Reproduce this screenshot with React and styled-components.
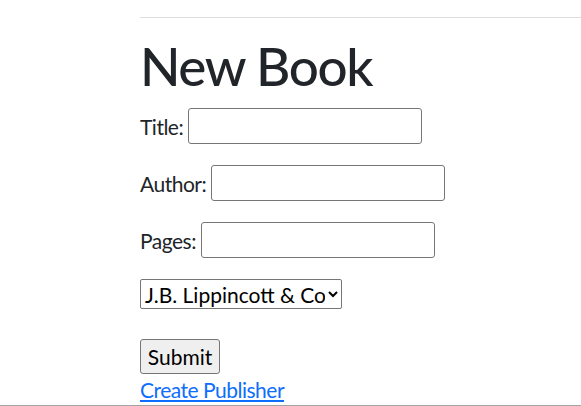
import styled, { createGlobalStyle } from "styled-components";

const GlobalStyle = createGlobalStyle`
  body {
    margin: 0;
    background: #fff;
    color: #212529;
    font-family: Lato, "Noto Sans", sans-serif;
  }
`;

const Page = styled.div`
  height: 406px;
  box-sizing: border-box;
  border-bottom: 1px solid #a3a3a3;
  overflow: hidden;
`;

const Container = styled.main`
  padding: 17px 0 0 140px;
`;

const Rule = styled.hr`
  margin: 0;
  height: 0;
  border: 0;
  border-top: 1px solid #dedede;
`;

const Heading = styled.h1`
  margin: 16px 0 10px;
  font-size: 53px;
  line-height: 64px;
  font-weight: 500;
  letter-spacing: -1.4px;
`;

const Form = styled.form`
  display: flex;
  flex-direction: column;
  align-items: flex-start;
  font-size: 21px;
  letter-spacing: -0.5px;
`;

const Field = styled.label`
  display: flex;
  align-items: center;
  gap: 5px;
  height: 36px;
  margin-bottom: 21px;
`;

const TextInput = styled.input`
  box-sizing: border-box;
  width: 234px;
  height: 36px;
  border: 1px solid #767676;
  border-radius: 3px;
  font: inherit;
  padding: 1px 3px;
`;

const Select = styled.select`
  box-sizing: border-box;
  width: 202px;
  height: 30px;
  border: 1px solid #767676;
  border-radius: 2px;
  font: inherit;
  color: #000;
  background: #fff;
  margin-bottom: 31px;
`;

const SubmitButton = styled.button`
  box-sizing: border-box;
  width: 80px;
  height: 35px;
  margin-top: -1px;
  border: 1px solid #767676;
  border-radius: 3px;
  background: #efefef;
  font: inherit;
  color: #000;
  padding: 0;
`;

const Link = styled.a`
  color: #0d6efd;
  line-height: 31px;
  text-decoration: underline;
`;

const App = () => {
  return (
    <Page>
      <GlobalStyle />
      <Container>
        <Rule />
        <Heading>New Book</Heading>
        <Form onSubmit={(e) => e.preventDefault()}>
          <Field>
            Title: <TextInput type="text" />
          </Field>
          <Field>
            Author: <TextInput type="text" />
          </Field>
          <Field>
            Pages: <TextInput type="number" />
          </Field>
          <Select defaultValue="1">
            <option value="1">J.B. Lippincott &amp; Co</option>
          </Select>
          <SubmitButton type="submit">Submit</SubmitButton>
          <Link href="#">Create Publisher</Link>
        </Form>
      </Container>
    </Page>
  );
};

export default App;
